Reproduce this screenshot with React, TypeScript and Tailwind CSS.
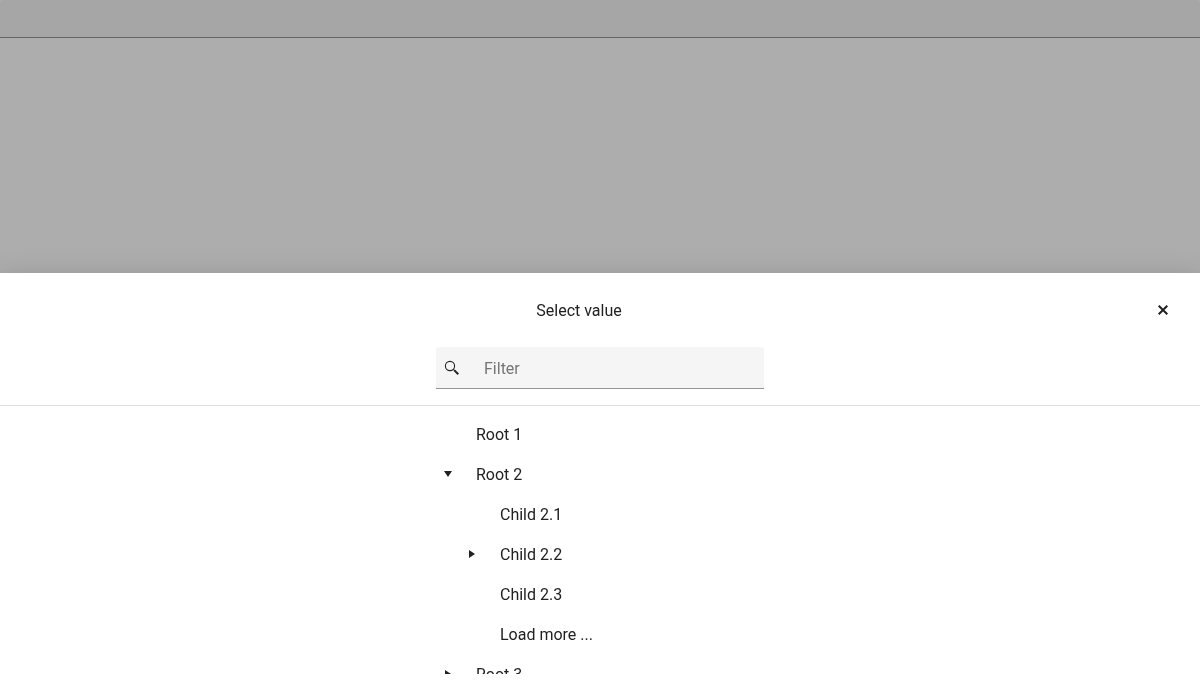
import React from "react";

type Row = { label: string; level: 0 | 1; state?: "open" | "closed" };

const rows: Row[] = [
  { label: "Root 1", level: 0 },
  { label: "Root 2", level: 0, state: "open" },
  { label: "Child 2.1", level: 1 },
  { label: "Child 2.2", level: 1, state: "closed" },
  { label: "Child 2.3", level: 1 },
  { label: "Load more ...", level: 1 },
  { label: "Root 3", level: 0, state: "closed" },
];

function Caret({ open, label }: { open: boolean; label: string }) {
  return (
    <button
      type="button"
      aria-label={`${open ? "Collapse" : "Expand"} ${label}`}
      className="flex size-6 items-center justify-center"
    >
      <svg width="10" height="10" viewBox="0 0 10 10" fill="currentColor" aria-hidden="true">
        {open ? <path d="M1 2h8L5 8z" /> : <path d="M2 1v8l6-4z" />}
      </svg>
    </button>
  );
}

function TreeRow({ row }: { row: Row }) {
  return (
    <li
      role="treeitem"
      aria-level={row.level + 1}
      aria-expanded={row.state ? row.state === "open" : undefined}
      className={`flex h-10 items-center gap-4 ${row.level === 1 ? "pl-6" : ""}`}
    >
      {row.state ? <Caret open={row.state === "open"} label={row.label} /> : <span className="size-6" />}
      <span>{row.label}</span>
    </li>
  );
}

export default function App() {
  return (
    <div className="min-h-screen bg-white font-['Roboto',sans-serif] text-base leading-normal text-[#212121]">
      <input
        type="text"
        aria-label="Value"
        readOnly
        className="block h-[38px] w-full rounded-t border-b border-[#949494] bg-[#f5f5f5] px-4 outline-none"
      />
      <div className="fixed inset-x-0 top-0 bottom-2 flex flex-col overflow-hidden bg-black/32 pt-[round(up,40vh,1px)]">
        <section
          role="dialog"
          aria-label="Select value"
          className="flex min-h-0 flex-1 flex-col bg-white leading-[19px] shadow-[0_8px_10px_-5px_rgba(0,0,0,0.2),0_16px_24px_2px_rgba(0,0,0,0.14),0_6px_30px_5px_rgba(0,0,0,0.12)]"
        >
          <header className="flex flex-col items-center gap-4 border-b border-[#e0e0e0] p-4">
            <div className="flex w-full items-center">
              <h2 className="flex-1 text-center">Select value</h2>
              <button type="button" aria-label="Close" className="flex size-[42px] items-center justify-center">
                <svg width="10" height="10" viewBox="0 0 10 10" stroke="currentColor" strokeWidth="2" aria-hidden="true">
                  <path d="M.7.7l8.6 8.6M9.3.7L.7 9.3" />
                </svg>
              </button>
            </div>
            <label className="flex h-[42px] w-[328px] items-center rounded-t bg-[#f5f5f5] shadow-[inset_0_-1px_#949494]">
              <span className="flex w-8 justify-center">
                <svg width="16" height="16" viewBox="0 0 16 16" fill="none" stroke="currentColor" aria-hidden="true">
                  <circle cx="6" cy="6" r="4.6" strokeWidth="1.1" />
                  <path d="M9.2 9.2l2 2" strokeWidth="1.1" />
                  <path d="M10.4 10.4l3.9 3.9" strokeWidth="2" />
                </svg>
              </span>
              <input
                type="text"
                aria-label="Filter"
                placeholder="Filter"
                className="h-full min-w-0 flex-1 bg-transparent px-4 outline-none placeholder:text-[#757575]"
              />
            </label>
          </header>
          <div className="min-h-0 flex-1 overflow-hidden pt-2">
            <ul role="tree" aria-label="Values" className="mx-auto w-[328px]">
              {rows.map((row) => (
                <TreeRow key={row.label} row={row} />
              ))}
            </ul>
          </div>
        </section>
      </div>
    </div>
  );
}
